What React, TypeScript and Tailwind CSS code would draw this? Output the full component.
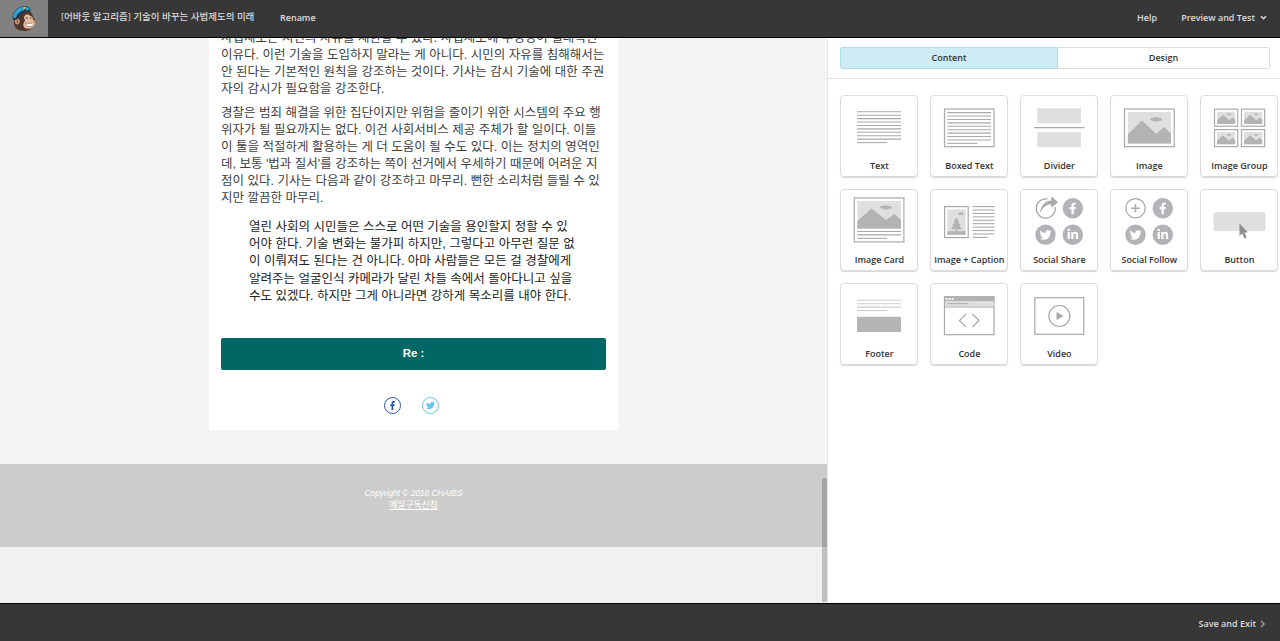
import type { ReactNode } from "react";
import { FaFacebookF, FaLinkedinIn, FaTwitter } from "react-icons/fa";

const DARK = "#b3b3b3";
const LIGHT = "#dfdfdf";
const SOCIAL = "#b3b3b7";

const INTRO = [
  "사법제도는 시민의 자유를 제한할 수 있다. 사법제도에 투명성이 절대적인",
  "이유다. 이런 기술을 도입하지 말라는 게 아니다. 시민의 자유를 침해해서는",
  "안 된다는 기본적인 원칙을 강조하는 것이다. 기사는 감시 기술에 대한 주권",
  "자의 감시가 필요함을 강조한다.",
];

const BODY = [
  "경찰은 범죄 해결을 위한 집단이지만 위험을 줄이기 위한 시스템의 주요 행",
  "위자가 될 필요까지는 없다. 이건 사회서비스 제공 주체가 할 일이다. 이들",
  "이 툴을 적절하게 활용하는 게 더 도움이 될 수도 있다. 이는 정치의 영역인",
  "데, 보통 '법과 질서'를 강조하는 쪽이 선거에서 우세하기 때문에 어려운 지",
  "점이 있다. 기사는 다음과 같이 강조하고 마무리. 뻔한 소리처럼 들릴 수 있",
  "지만 깔끔한 마무리.",
];

const QUOTE = [
  "열린 사회의 시민들은 스스로 어떤 기술을 용인할지 정할 수 있",
  "어야 한다. 기술 변화는 불가피 하지만, 그렇다고 아무런 질문 없",
  "이 이뤄져도 된다는 건 아니다. 아마 사람들은 모든 걸 경찰에게",
  "알려주는 얼굴인식 카메라가 달린 차들 속에서 돌아다니고 싶을",
  "수도 있겠다. 하지만 그게 아니라면 강하게 목소리를 내야 한다.",
];

function Lines({ lines }: { lines: string[] }) {
  return (
    <>
      {lines.map((line) => (
        <span key={line} className="block whitespace-nowrap">
          {line}
        </span>
      ))}
    </>
  );
}

type RulesProps = {
  x: number;
  y: number;
  width: number;
  count: number;
  gap?: number;
  last?: number;
  color?: string;
};

function Rules({ x, y, width, count, gap = 3.42, last = 30, color = "#a9a9a9" }: RulesProps) {
  return (
    <g stroke={color} strokeWidth="1.1">
      {Array.from({ length: count }, (_, i) => (
        <line
          key={i}
          x1={x}
          x2={x + (i === count - 1 ? last : width)}
          y1={y + i * gap}
          y2={y + i * gap}
        />
      ))}
    </g>
  );
}

function Frame({ x, y, w, h }: { x: number; y: number; w: number; h: number }) {
  return <rect x={x} y={y} width={w} height={h} fill="#fff" stroke="#a9a9a9" strokeWidth="1.2" />;
}

// Landscape drawn on a 44x32 canvas
function Landscape({ x, y, w, h }: { x: number; y: number; w: number; h: number }) {
  return (
    <svg x={x} y={y} width={w} height={h} viewBox="0 0 44 32" preserveAspectRatio="none">
      <rect width="44" height="32" fill={LIGHT} />
      <path d="M0 23 14.4 8.5 29 22 37.2 15 44 21.8V32H0Z" fill={DARK} />
      <path
        d="M23 7.300c0-1 1.400-1.600 2.800-1.400.5-1.200 4-1.400 5 0 2-.5 4 .2 4 1.500s-1.800 1.800-3.300 1.500c-.8 1.200-4 1.200-4.700 0-1.900.2-3.800-.4-3.800-1.600Z"
        fill={DARK}
      />
    </svg>
  );
}

function SocialDots() {
  return (
    <>
      <g fill={SOCIAL}>
        <circle cx="52.8" cy="19.3" r="10.2" />
        <circle cx="25.5" cy="45.8" r="10.2" />
        <circle cx="52.8" cy="45.8" r="10.2" />
      </g>
      <FaFacebookF x={46.8} y={13.4} size={12} color="#fff" />
      <FaTwitter x={19.6} y={40} size={12} color="#fff" />
      <FaLinkedinIn x={46.7} y={39.4} size={12.2} color="#fff" />
    </>
  );
}

const BLOCKS: { label: string; art: ReactNode }[] = [
  { label: "Text", art: <Rules x={17} y={16.8} width={44} count={10} /> },
  {
    label: "Boxed Text",
    art: (
      <>
        <Frame x={14.5} y={14} w={49.5} h={37.7} />
        <Rules x={17.3} y={17.6} width={43.7} count={10} />
      </>
    ),
  },
  {
    label: "Divider",
    art: (
      <>
        <rect x="17.3" y="13.3" width="43.7" height="15" fill={LIGHT} />
        <rect x="17.3" y="37" width="43.7" height="15" fill={LIGHT} />
        <line x1="14" x2="64.5" y1="32.6" y2="32.6" stroke="#a9a9a9" strokeWidth="1.2" />
      </>
    ),
  },
  {
    label: "Image",
    art: (
      <>
        <Frame x={14.5} y={14} w={49.7} h={37.7} />
        <Landscape x={17.6} y={17} w={43.4} h={31.8} />
      </>
    ),
  },
  {
    label: "Image Group",
    art: (
      <>
        {[14.5, 41.5].map((x) =>
          [14.2, 34.6].map((y) => (
            <g key={`${x}-${y}`}>
              <Frame x={x} y={y} w={23.2} h={17} />
              <Landscape x={x + 2.4} y={y + 2.3} w={18.6} h={12.6} />
            </g>
          )),
        )}
      </>
    ),
  },
  {
    label: "Image Card",
    art: (
      <>
        <Frame x={14.3} y={8.9} w={49.6} h={44} />
        <Landscape x={17.2} y={12} w={43.8} h={27.8} />
        <Rules x={17.2} y={42.5} width={43.8} count={3} />
      </>
    ),
  },
  {
    label: "Image + Caption",
    art: (
      <>
        <Frame x={14.6} y={17.6} w={23.6} h={31} />
        <rect x="17.3" y="20.4" width="18.3" height="25.4" fill={LIGHT} />
        <rect x="17.3" y="42.2" width="18.3" height="3.6" fill={DARK} />
        <path
          d="M26.4 28.5 29.2 33H28l2.6 3.6h-1.3l2.7 3.7h-4.8v2h-1.6v-2h-4.8l2.7-3.7h-1.3l2.6-3.6h-1.2Z"
          fill={DARK}
        />
        <ellipse cx="31" cy="24.7" rx="3" ry="1.3" fill={DARK} />
        <Rules x={42.7} y={17.6} width={21.8} count={10} last={15} />
      </>
    ),
  },
  {
    label: "Social Share",
    art: (
      <>
        <path d="M27.5 10a9.6 9.6 0 1 0 7.8 8.2" fill="none" stroke="#a4a4a6" strokeWidth="1.2" />
        <path
          d="M20 24c.8-7.3 5-12 11.3-12.4V7.300L38 13.300l-6.700 5.500v-3.600C26.500 15.300 23 18 20 24Z"
          fill="#a9a9ac"
        />
        <SocialDots />
      </>
    ),
  },
  {
    label: "Social Follow",
    art: (
      <>
        <circle cx="25.5" cy="19.3" r="9.7" fill="none" stroke="#a4a4a6" strokeWidth="1.2" />
        <path d="M25.5 15v8.6M21.2 19.3h8.6" stroke="#a4a4a6" strokeWidth="1.4" />
        <SocialDots />
      </>
    ),
  },
  {
    label: "Button",
    art: (
      <>
        <rect x="13.5" y="23.2" width="52" height="18.8" rx="2" fill={LIGHT} />
        <path
          d="M39.500 34.500v12.300l2.700-2.300 2.300 5 2.200-1-2.200-4.800 3.300-.4Z"
          fill="#8f8f8f"
        />
      </>
    ),
  },
  {
    label: "Footer",
    art: (
      <>
        <Rules x={17} y={17.3} width={44} count={4} color="#ccc" />
        <rect x="17" y="33.8" width="44" height="15.2" fill="#b5b5b5" />
      </>
    ),
  },
  {
    label: "Code",
    art: (
      <>
        <Frame x={14.5} y={13.7} w={49.5} h={38} />
        <rect x="14" y="13.300" width="50.5" height="5.2" rx="1" fill={DARK} />
        <rect x="15.2" y="18.5" width="48.2" height="5" fill={LIGHT} />
        <path d="M14.5 24H64M17.5 20.7h21" stroke="#a9a9a9" />
        <g fill="#fff">
          <circle cx="16.8" cy="16" r="1.1" />
          <circle cx="19.7" cy="16" r="1.1" />
          <circle cx="22.6" cy="16" r="1.1" />
        </g>
        <path
          d="m36 31-6.500 6.500L36 44M42.500 31l6.500 6.500-6.500 6.500"
          fill="none"
          stroke="#a9a9a9"
          strokeWidth="1.2"
        />
      </>
    ),
  },
  {
    label: "Video",
    art: (
      <>
        <Frame x={14.8} y={14.7} w={49} h={36.6} />
        <circle cx="39.4" cy="33" r="10.5" fill="none" stroke="#a9a9a9" strokeWidth="1.2" />
        <path d="M36.5 29v8l7-4Z" fill="#a9a9a9" />
      </>
    ),
  },
];

function MonkeyLogo() {
  return (
    <svg width="48" height="37" viewBox="0 0 48 37">
      <path
        d="M14.5 19c-2 5 .5 10.500 6 11.500 3 .8 7 .8 9.500-1.300 3-2.200 5-4.500 5-7 0-3.200-1.500-4.200-2.200-6.200C31.500 9.500 24 9 19.500 13Z"
        fill="#50362b"
      />
      <ellipse cx="17.3" cy="21.6" rx="2.4" ry="2.8" fill="#c99b7b" />
      <path d="M16.3 20c1.500.2 2 1.700 1 3" fill="none" stroke="#50362b" strokeWidth=".8" />
      <path
        d="M24.5 16c2-2.300 4.500-1.500 5.500-.2 2.300.2 3 1.800 2.800 3.800 1.800 1.200 3 2.600 2 5-1.400 3-5 5-8.300 4-3.300-1-3.800-4-2.500-6.200.8-1.300 1.300-2 .6-3.200-.6-1-.7-2.300-.1-3.200Z"
        fill="#e5bd9c"
      />
      <path
        d="M25.600 22.700c2.600 1.500 5.800 1.200 8.600-.7-.2 3-2.500 4.700-5 4.600-2 0-3.400-1.700-3.600-3.900Z"
        fill="#fff"
        stroke="#50362b"
        strokeWidth=".4"
      />
      <circle cx="26.9" cy="18" r=".8" fill="#35231c" />
      <circle cx="30.7" cy="18" r=".7" fill="#35231c" />
      {/* cap */}
      <path
        d="M12.500 18.500c-.5-5.500 3.500-10.500 9.500-12 3-.7 6.500-.3 7.800 1.500.8 1.500.6 3 .2 4.200-5.500-.7-9.500.8-13.500 7.300-1.500 1-3.500.8-4-1Z"
        fill="#1f3a4e"
      />
      <path d="M13 16.500c.8-4.500 4-8.500 9-9.500l2.500 3.300c-4.500.7-7 3.200-9 7.400-1 .6-2.200.2-2.500-1.200Z" fill="#2fa3d6" />
      <path d="M24.500 7c2-.2 3.800.1 4.500 1.300l.3 1.800-3.300.1Z" fill="#2fa3d6" />
      <circle cx="24.2" cy="7.900" r="1.200" fill="#e8ca56" />
    </svg>
  );
}

function TopBar() {
  return (
    <header className="flex h-[38px] shrink-0 items-stretch border-b border-black bg-[#373737] font-semibold text-[#dcdcdc]">
      <div className="w-12 bg-[#808080]">
        <MonkeyLogo />
      </div>
      <div className="flex flex-1 items-center pr-[13px] pb-[2px] pl-[13px]">
        <span className="w-[219px] text-[9.5px] font-medium whitespace-nowrap">
          [어바웃 알고리즘] 기술이 바꾸는 사법제도의 미래
        </span>
        <span>Rename</span>
        <span className="mr-6 ml-auto">Help</span>
        <span>Preview and Test</span>
        <svg className="ml-[5px]" width="7" height="6" viewBox="0 0 7 6">
          <path d="m1 1.3 2.5 2.5L6 1.3" fill="none" stroke="#dcdcdc" strokeWidth="1.5" />
        </svg>
      </div>
    </header>
  );
}

function Preview() {
  return (
    <section className="relative w-[828px] shrink-0 overflow-hidden border-r border-[#e6e6e6] bg-[#f1f1f1] font-['Liberation_Sans','Noto_Sans_CJK_KR',sans-serif]">
      <div className="h-[426px] overflow-hidden bg-[#f4f4f4]">
        <article className="mx-auto h-[392px] w-[409px] overflow-hidden bg-white px-3 text-[12.5px] leading-[17px] text-[#404040]">
          <p className="-mt-2">
            <Lines lines={INTRO} />
          </p>
          <p className="mt-[7px]">
            <Lines lines={BODY} />
          </p>
          <blockquote className="mt-3 ml-7 leading-[17.2px] text-[#222]">
            <Lines lines={QUOTE} />
          </blockquote>
          <div className="mt-[33px] flex h-8 items-center justify-center rounded-xs bg-[#006765] pb-px text-[11.5px] font-bold text-white">
            Re :
          </div>
          <div className="mt-[27px] flex justify-center gap-[21px] pr-[4px]">
            <span className="flex size-[17px] items-center justify-center rounded-full border-[1.5px] border-[#2b529b] text-[#2b529b]">
              <FaFacebookF size={9} />
            </span>
            <span className="flex size-[17px] items-center justify-center rounded-full border-[1.5px] border-[#67c3ea] text-[#67c3ea]">
              <FaTwitter size={9} />
            </span>
          </div>
        </article>
      </div>
      <footer className="flex h-[83px] flex-col items-center bg-[#ccc] pt-[23px] text-[8.3px] leading-3 text-white">
        <em>Copyright © 2018 CHAIBS</em>
        <a className="text-[8.8px] underline">메일구독신청</a>
      </footer>
      <div className="absolute right-0 bottom-px h-[124px] w-[5px] rounded-t-full bg-black/20" />
    </section>
  );
}

function BlockPanel() {
  return (
    <aside className="flex-1 overflow-hidden bg-white font-semibold text-[#333]">
      <div className="border-b border-[#e3e3e3] px-3 pt-[9px] pr-[10px] pb-[9px]">
        <div className="flex h-[22px] text-center leading-5">
          <div className="w-[218px] rounded-l-xs border border-[#acdde9] bg-[#cdebf2]">Content</div>
          <div className="flex-1 rounded-r-xs border border-l-0 border-[#dedede]">Design</div>
        </div>
      </div>
      <div className="grid grid-cols-[repeat(5,78px)] gap-3 pt-4 pl-[12.4px]">
        {BLOCKS.map(({ label, art }) => (
          <div
            key={label}
            className="h-[82px] rounded-[4px] border border-[#dcdcdc] text-center shadow-[0_1px_1px_#d5d5d5]"
          >
            <svg className="block" width="76" height="62" viewBox="1 1 76 62">
              {art}
            </svg>
            <div className="-mx-1 leading-4 whitespace-nowrap">{label}</div>
          </div>
        ))}
      </div>
    </aside>
  );
}

export default function App() {
  return (
    <div className="flex h-[641px] w-[1280px] flex-col overflow-hidden font-['Open_Sans','Noto_Sans_CJK_KR',sans-serif] text-[9px]">
      <TopBar />
      <main className="flex min-h-0 flex-1">
        <Preview />
        <BlockPanel />
      </main>
      <div className="flex h-[38px] shrink-0 items-center justify-end border-t border-black bg-[#373737] pt-[3px] pr-[14px] font-semibold text-[#dcdcdc]">
        Save and Exit
        <svg className="ml-1" width="6" height="8" viewBox="0 0 6 8">
          <path d="m1 .8 3.2 3.2L1 7.2" fill="none" stroke="#aaa" strokeWidth="1.2" />
        </svg>
      </div>
    </div>
  );
}
